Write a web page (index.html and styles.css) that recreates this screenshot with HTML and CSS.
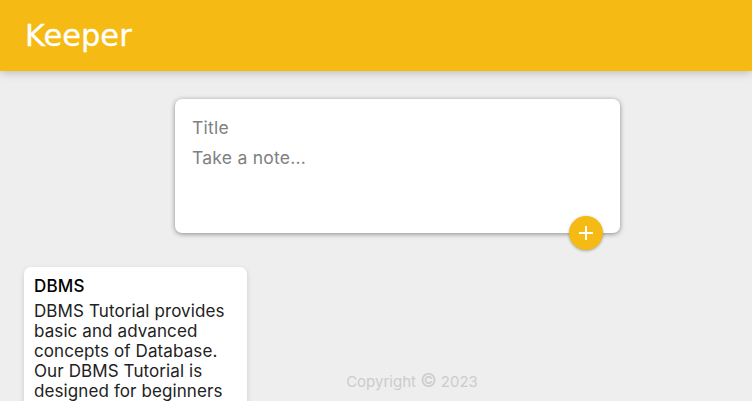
FILE: index.html
```html
<!DOCTYPE html>
<html lang="en">
<head>
    <meta charset="UTF-8">
    <meta name="viewport" content="width=device-width, initial-scale=1.0">
    <title>Keeper</title>
    <link rel="stylesheet" href="styles.css">
</head>
<body>
<header class="header">
  <h1 class="logo">Keeper</h1>
</header>

<form class="create-note">
  <input type="text" class="note-title" placeholder="Title">
  <textarea class="note-text" rows="3" placeholder="Take a note..."></textarea>
  <!-- Add button sits over the bottom edge of the form -->
  <button type="button" class="add-btn" aria-label="Add note">
    <svg width="24" height="24" viewBox="0 0 24 24"><path d="M19 13h-6v6h-2v-6H5v-2h6V5h2v6h6v2z" fill="#fff"/></svg>
  </button>
</form>

<div class="notes">
  <div class="note">
    <h2 class="note-heading">DBMS</h2>
    <p class="note-body">DBMS Tutorial provides basic and advanced concepts of Database. Our DBMS Tutorial is designed for beginners</p>
  </div>
</div>

<footer class="footer">
  <p>Copyright <span class="copy">&copy;</span> 2023</p>
</footer>
</body>
</html>
```

FILE: styles.css
```css
* {
    box-sizing: border-box;
}
html, body {
    height: 100%;
}
body {
    margin: 0;
    background-color: #eeeeee;
    font-family: "Inter", "Noto Sans", sans-serif;
    overflow: hidden;
    position: relative;
}
.header {
    background-color: #f5ba13;
    height: 71px;
    padding: 0 25px;
    display: flex;
    align-items: center;
    box-shadow: 0 0 10px 0 rgba(0, 0, 0, 0.3);
}
.logo {
    margin: 0;
    color: white;
    font-family: "DejaVu Sans", sans-serif;
    font-size: 30.5px;
    font-weight: 400;
    -webkit-text-stroke: 0.3px white;
}
.create-note {
    position: relative;
    width: 445px;
    height: 134px;
    margin: 28px 0 34px 175px;
    padding: 14px 18px 14px 17px;
    background-color: white;
    border-radius: 7px;
    box-shadow: 0 1px 5px rgb(138, 137, 137);
}
.note-title, .note-text {
    display: block;
    width: 100%;
    border: none;
    outline: none;
    padding: 4px 0;
    font-family: inherit;
    font-size: 17.5px;
    line-height: 22px;
    letter-spacing: 0.25px;
    resize: none;
    color: #333;
}
.note-title::placeholder, .note-text::placeholder {
    color: #808080;
    opacity: 1;
}
.add-btn {
    position: absolute;
    right: 17px;
    bottom: -17px;
    width: 34px;
    height: 34px;
    padding: 0;
    border: none;
    border-radius: 50%;
    background-color: #f5ba13;
    display: flex;
    align-items: center;
    justify-content: center;
    box-shadow: 0 1px 3px rgba(0, 0, 0, 0.3);
}
.notes {
    padding: 0 24px;
}
.note {
    width: 223px;
    padding: 9px 10px 10px;
    background-color: white;
    border-radius: 7px;
    box-shadow: 0 2px 5px #ccc;
}
.note-heading {
    margin: 0 0 5px;
    font-size: 17px;
    line-height: 20px;
    font-weight: 500;
    letter-spacing: 0.2px;
    color: #000;
}
.note-body {
    margin: 0;
    font-size: 17px;
    line-height: 20px;
    letter-spacing: 0.1px;
    color: #222;
}
.footer {
    position: absolute;
    left: 0;
    right: 0;
    bottom: 9px;
    padding-left: 72px;
    text-align: center;
}
.footer p {
    margin: 0;
    color: #ccc;
    font-size: 15px;
    line-height: 20px;
}
.copy {
    font-size: 18px;
    line-height: 18px;
}
```
